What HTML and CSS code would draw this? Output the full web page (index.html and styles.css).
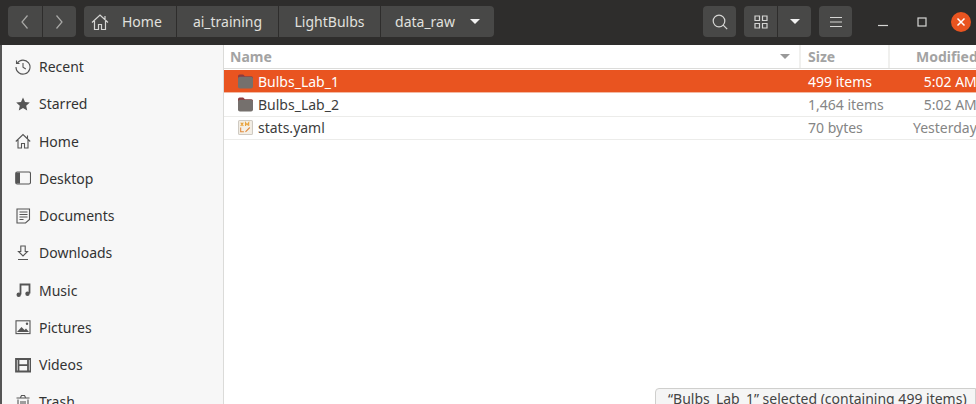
FILE: index.html
```html
<!DOCTYPE html>
<html lang="en">
<head>
    <meta charset="UTF-8">
    <meta name="viewport" content="width=device-width, initial-scale=1.0">
    <title>data_raw</title>
    <link rel="stylesheet" href="styles.css">
</head>
<body>
    <div class="window">
        <header class="headerbar">
            <div class="group nav">
                <button class="btn nav-btn"><svg width="16" height="16" viewBox="0 0 16 16"><path d="M10.500 1.500 5 8l5.500 6.500" class="line line-dim"/></svg></button>
                <button class="btn nav-btn"><svg width="16" height="16" viewBox="0 0 16 16"><path d="M5.500 1.500 11 8l-5.500 6.500" class="line line-dim"/></svg></button>
            </div>
            <div class="group path">
                <button class="btn crumb crumb-home">
                    <svg width="18" height="18" viewBox="0 0 18 18"><path d="M1 9.500 9 2l8 7.500M3.500 8v8.500h4v-5h3v5h4V8M14 3v3" class="line"/></svg>
                    Home
                </button>
                <button class="btn crumb crumb-ai">ai_training</button>
                <button class="btn crumb crumb-bulbs">LightBulbs</button>
                <button class="btn crumb crumb-raw">data_raw <span class="caret"></span></button>
            </div>
            <button class="btn tool search">
                <svg width="18" height="18" viewBox="0 0 18 18"><circle cx="8" cy="8" r="5.800" class="line"/><path d="m12.200 12.200 4 4" class="line"/></svg>
            </button>
            <div class="group views">
                <button class="btn view-btn">
                    <svg width="14" height="14" viewBox="0 0 14 14"><path d="M1 1h4.500v4.500H1zM8.500 1H13v4.500H8.500zM1 8.500h4.500V13H1zM8.500 8.500H13V13H8.500z" class="line"/></svg>
                </button>
                <button class="btn view-btn"><span class="caret"></span></button>
            </div>
            <button class="btn tool menu">
                <svg width="14" height="12" viewBox="0 0 14 12"><path d="M1 1.500h12M1 6h12M1 10.500h12" class="line"/></svg>
            </button>
            <div class="win-controls">
                <svg class="win-min" width="10" height="10" viewBox="0 0 10 10"><path d="M0 8.500h10" class="line"/></svg>
                <svg class="win-max" width="10" height="10" viewBox="0 0 10 10"><rect x="1" y="1" width="8" height="8" class="line"/></svg>
                <div class="win-close"><svg width="10" height="10" viewBox="0 0 10 10"><path d="m1.500 1.500 7 7m0-7-7 7" class="line"/></svg></div>
            </div>
        </header>

        <div class="content">
            <nav class="sidebar">
                <div class="place">
                    <svg class="place-icon" viewBox="0 0 16 16"><path d="M2.200 4.200A7 7 0 1 1 1 8M1.500 1.500v3h3M8 4v4.300l2.800 1.700" class="stroke"/></svg>
                    Recent
                </div>
                <div class="place">
                    <svg class="place-icon" viewBox="0 0 16 16"><path d="m8 1.500 2 4.500 4.800.5-3.600 3.200 1 4.800L8 12.100 3.800 14.500l1-4.800L1.200 6.500 6 6z" class="solid"/></svg>
                    Starred
                </div>
                <div class="place">
                    <svg class="place-icon" viewBox="0 0 16 16"><path d="M.8 8.500 8 1.500l7.200 7M3 7v8h3.500v-4.500h3V15H13V7M12.500 2.500v3" class="stroke"/></svg>
                    Home
                </div>
                <div class="place">
                    <svg class="place-icon" viewBox="0 0 16 16"><rect x=".7" y="2" width="14.800" height="12" rx="1.500" class="stroke"/><path d="M1 2.500h4v11H1z" class="solid"/></svg>
                    Desktop
                </div>
                <div class="place">
                    <svg class="place-icon" viewBox="0 0 16 16"><path d="M2 1h12.500v10.500L10.500 15H2zM4.500 4h8M4.500 6.500h8M4.500 9h8M4.500 11.500h4" class="stroke"/></svg>
                    Documents
                </div>
                <div class="place">
                    <svg class="place-icon" viewBox="0 0 16 16"><path d="M5.800 1h4.400v5.500h2.300L8 11 3.500 6.500h2.300zM3 14.500h10" class="stroke"/></svg>
                    Downloads
                </div>
                <div class="place">
                    <svg class="place-icon" viewBox="0 0 16 16"><path d="M5.500 12.500V2.500h9v9" class="stroke stroke-bold"/><circle cx="3.700" cy="12.800" r="2.200" class="solid"/><circle cx="12.500" cy="11.800" r="2.200" class="solid"/></svg>
                    Music
                </div>
                <div class="place">
                    <svg class="place-icon" viewBox="0 0 16 16"><rect x="1" y="1.800" width="14" height="12.800" class="stroke"/><path d="m2 13 4.500-5 3 3 1.500-1.500 3 3.500z" class="solid"/><circle cx="12" cy="4.800" r="1.200" class="solid"/></svg>
                    Pictures
                </div>
                <div class="place">
                    <svg class="place-icon" viewBox="0 0 16 16"><path d="M1 2h14.500v12.500H1zM3.500 2v12.500M13 2v12.500M3.500 8.200H13" class="stroke stroke-bold"/></svg>
                    Videos
                </div>
                <div class="place">
                    <svg class="place-icon" viewBox="0 0 16 16"><path d="M1.500 4h13M5.500 3.500 6.500 1.500h3l1 2M3 5.500V15h10V5.500M6 7v6M8 7v6M10 7v6" class="stroke"/></svg>
                    Trash
                </div>
            </nav>

            <main class="files">
                <div class="row row-head">
                    <div class="cell cell-name">Name <span class="sort"></span></div>
                    <div class="cell cell-size">Size</div>
                    <div class="cell cell-date">Modified</div>
                </div>
                <div class="row row-selected">
                    <div class="cell cell-name"><svg class="folder" viewBox="1 1.500 14 14"><path d="M1 3.500A1.500 1.500 0 0 1 2.500 2h3.300L7.500 3.500h6A1.500 1.500 0 0 1 15 5v1H1z" fill="#8e3b3f"/><rect x="1" y="4" width="14" height="11" rx="1.800" fill="#75706d"/></svg>Bulbs_Lab_1</div>
                    <div class="cell cell-size">499 items</div>
                    <div class="cell cell-date">5:02 AM</div>
                </div>
                <div class="row">
                    <div class="cell cell-name"><svg class="folder" viewBox="1 1.500 14 14"><path d="M1 3.500A1.500 1.500 0 0 1 2.500 2h3.300L7.500 3.500h6A1.500 1.500 0 0 1 15 5v1H1z" fill="#8e3b3f"/><rect x="1" y="4" width="14" height="11" rx="1.800" fill="#75706d"/></svg>Bulbs_Lab_2</div>
                    <div class="cell cell-size">1,464 items</div>
                    <div class="cell cell-date">5:02 AM</div>
                </div>
                <div class="row">
                    <div class="cell cell-name"><svg class="folder" viewBox="1 1 14 14"><rect x="1.500" y="1.500" width="13" height="13" rx="1" fill="#f4efe6" stroke="#cfcac2"/><path d="m3.500 3.500 2.500 3m0-3-2.500 3M8 6.500v-3l1.500 2 1.500-2v3" fill="none" stroke="#e8a33d"/><path d="M3.500 8v4h3M8 12l4-4" fill="none" stroke="#e08a3c"/></svg>stats.yaml</div>
                    <div class="cell cell-size">70 bytes</div>
                    <div class="cell cell-date">Yesterday</div>
                </div>
            </main>
        </div>

        <div class="status">“Bulbs_Lab_1” selected (containing 499 items)</div>
    </div>
</body>
</html>
```

FILE: styles.css
```css
html, body {
    margin: 0;
    height: 100%;
    overflow: hidden;
}
body {
    font-family: "Noto Sans", sans-serif;
    font-size: 14px;
    color: #3d3d3d;
    background: #555;
}
.window {
    position: relative;
    width: 976px;
    height: 404px;
    overflow: hidden;
}
.line {
    fill: none;
    stroke: #d6d6d4;
    stroke-width: 1.200;
}
.line-dim {
    stroke: #a9a9a7;
}
.caret {
    display: inline-block;
    border-left: 5px solid transparent;
    border-right: 5px solid transparent;
    border-top: 5px solid #f2f2f2;
}

/* top bar */
.headerbar {
    height: 45px;
    box-sizing: border-box;
    padding: 6px 5px 8px 8px;
    display: flex;
    align-items: stretch;
    background: #2e2d2c;
}
.group {
    display: flex;
    gap: 1px;
}
.btn {
    display: flex;
    align-items: center;
    justify-content: center;
    padding: 0;
    border: 0;
    font: inherit;
    color: #e0e0de;
    background: #484847;
}
.nav .btn:first-child, .path .btn:first-child, .views .btn:first-child {
    border-radius: 4px 0 0 4px;
}
.nav .btn:last-child, .path .btn:last-child, .views .btn:last-child {
    border-radius: 0 4px 4px 0;
}
.nav {
    margin-right: 8px;
}
.nav-btn {
    width: 33.500px;
}
.crumb-home {
    width: 92px;
    gap: 13px;
    justify-content: flex-start;
    padding-left: 7px;
}
.crumb-ai {
    width: 101px;
}
.crumb-bulbs {
    width: 101px;
}
.crumb-raw {
    width: 113px;
    gap: 15px;
}
.tool {
    width: 33px;
    border-radius: 4px;
}
.search {
    margin-left: 209px;
}
.views {
    margin-left: 8px;
}
.view-btn {
    width: 33px;
}
.menu {
    margin-left: 8px;
}
.win-controls {
    display: flex;
    align-items: center;
    margin-left: 26px;
}
.win-min {
    margin-right: 29px;
}
.win-max {
    margin-right: 24px;
}
.win-close {
    width: 20px;
    height: 20px;
    border-radius: 50%;
    display: flex;
    align-items: center;
    justify-content: center;
    background: #e95420;
}
.win-close .line {
    stroke: #fff;
    stroke-width: 1.500;
}

/* body of the window */
.content {
    display: flex;
    height: 359px;
    padding-left: 2px;
}
.sidebar {
    width: 221px;
    flex: none;
    padding-top: 3px;
    background: #f7f7f7;
    border-right: 1px solid #dbdbd9;
}
.place {
    height: 37.250px;
    display: flex;
    align-items: center;
    gap: 8px;
    padding-left: 13px;
    color: #333;
}
.place-icon {
    width: 16px;
    height: 16px;
    flex: none;
}
.stroke {
    fill: none;
    stroke: #555;
    stroke-width: 1.100;
}
.stroke-bold {
    stroke-width: 1.800;
}
.solid {
    fill: #555;
}

/* file list */
.files {
    flex: 1;
    background: #fff;
}
.row {
    display: flex;
    height: 22.300px;
    align-items: center;
    border-bottom: 1px solid #ececea;
}
.row-head {
    height: 24px;
    box-sizing: border-box;
    font-weight: 700;
    border-bottom: 1px solid #dcdcda;
    margin-bottom: 1px;
}
.row-selected {
    color: #fff;
    background: #e95420;
    border-bottom-color: #f3b9a3;
}
.cell {
    box-sizing: border-box;
    display: flex;
    align-items: center;
    height: 100%;
    white-space: nowrap;
}
.cell-name {
    width: 577px;
    padding-left: 14px;
}
.cell-size {
    width: 89px;
    padding-left: 7px;
    color: #858585;
}
.cell-date {
    flex: 1;
    justify-content: flex-end;
    padding-right: 1px;
    color: #858585;
}
.row-selected .cell {
    color: #fff;
}
.row-head .cell {
    color: #a3a3a3;
}
.row-head .cell-name {
    padding-left: 6px;
    justify-content: space-between;
    padding-right: 9px;
    border-right: 2px solid #f0f0ee;
}
.row-head .cell-size {
    border-right: 2px solid #f0f0ee;
}
.row-head .cell-date {
    justify-content: flex-start;
    padding-left: 26px;
    padding-right: 0;
}
.sort {
    border-left: 5px solid transparent;
    border-right: 5px solid transparent;
    border-top: 5px solid #999;
}
.folder {
    width: 15px;
    height: 15px;
    margin-right: 5px;
    flex: none;
}

/* floating status label */
.status {
    position: absolute;
    left: 655px;
    top: 388px;
    width: 321px;
    height: 30px;
    box-sizing: border-box;
    padding: 0 0 0 12px;
    white-space: nowrap;
    border: 1px solid #cfcfcd;
    border-radius: 4px 0 0 0;
    background: #f5f5f5;
    color: #444;
}
```
